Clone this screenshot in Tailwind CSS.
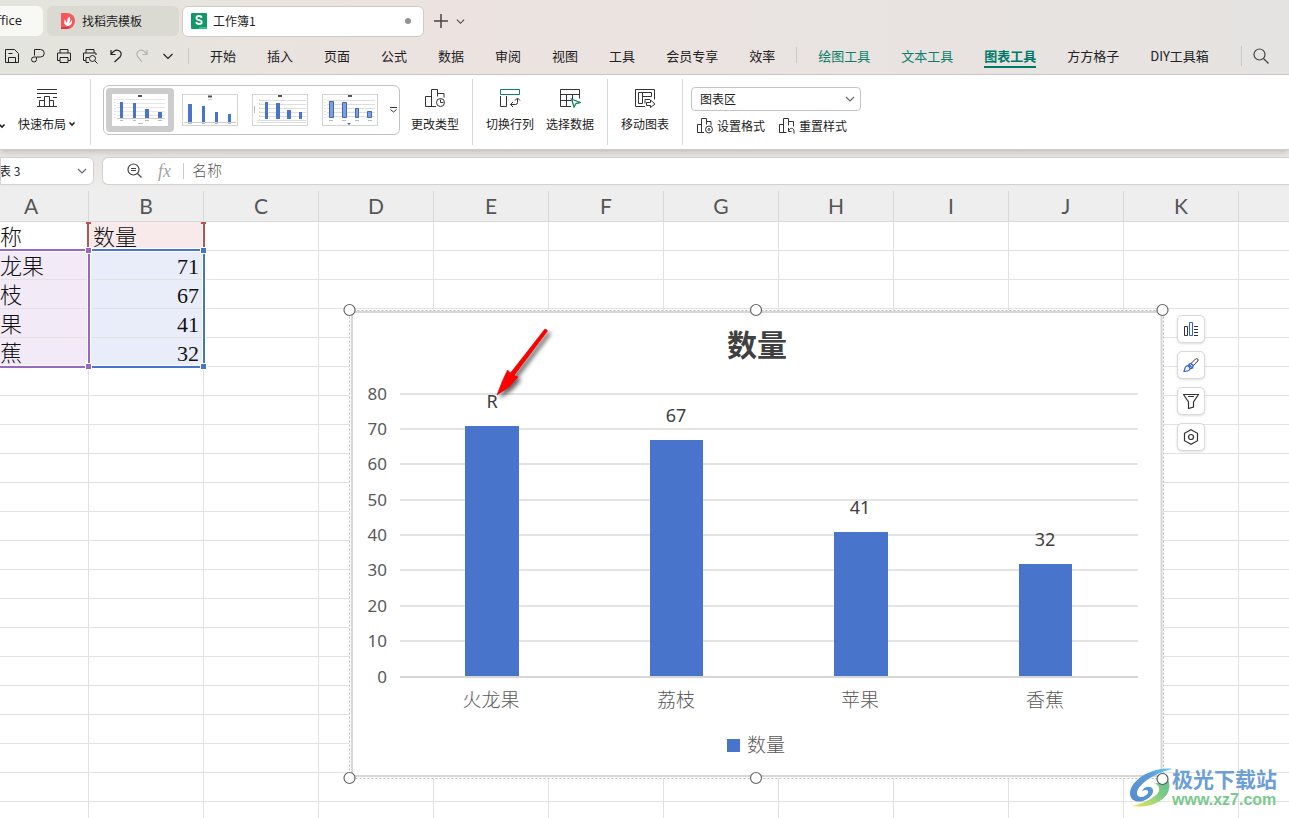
<!DOCTYPE html>
<html lang="zh-CN">
<head>
<meta charset="utf-8">
<title>工作簿1</title>
<script src="https://cdn.jsdelivr.net/npm/@tailwindcss/browser@4"></script>
</head>
<body class="flex h-screen flex-col overflow-hidden bg-white font-['Noto_Sans_CJK_SC',sans-serif] text-xs text-[#222]">

<svg class="hidden">
  <symbol id="chev" viewBox="0 0 10 10"><path d="M1 3l4 4 4-4" fill="none" stroke="currentColor" stroke-width="1.2"/></symbol>
  <symbol id="caret" viewBox="0 0 8 8"><path d="M1.500 2.500L4 5l2.500-2.500" fill="none" stroke="currentColor" stroke-width="1.6"/></symbol>
</svg>

<header class="shrink-0 border-b border-[#c9c5c3] bg-linear-to-r from-[#e3e4dd] via-[#ece3e0] via-35% to-[#e5e3e1]">
  <div class="flex h-[38px] items-center overflow-hidden pt-1">
    <button class="-ml-14 flex h-[30px] w-[99px] shrink-0 items-center justify-end rounded-md bg-[#f8f8f4] pr-[21px] font-['Open_Sans',sans-serif] text-[13px]">WPS Office</button>
    <button class="ml-1 flex h-[30px] w-[132px] shrink-0 items-center gap-[6px] rounded-md bg-[#dadad2] pl-[13px]">
      <svg class="size-4" viewBox="0 0 16 16"><path d="M1 0h6a8 8 0 0 1 0 16H1z" fill="#f4585c"/><path d="M1 14h10a8 8 0 0 1-4 2H1z" fill="#d63a43"/><path d="M8 13C4 12.500 3.500 9 5 6.500L7 10c0-3 .5-5 2.500-6.500C11 6 10 8 9 10.500L12 7c.5 3-1 5.500-4 6z" fill="#fff"/></svg>
      找稻壳模板
    </button>
    <button class="ml-[3px] flex h-[31px] w-[242px] shrink-0 items-center gap-[6px] rounded-md border border-[#cfcac7] bg-white pl-2 pr-3">
      <svg class="size-4" viewBox="0 0 16 16"><rect width="16" height="16" rx="1" fill="#11996b"/><path d="M8 14h8v1a1 1 0 0 1-1 1H8z" fill="#3bbd85"/><path d="M10.800 4.800C10.300 3.400 9.300 3 8 3 6.500 3 5.400 3.700 5.400 5c0 2.800 5.400 1.300 5.400 4 0 1.300-1.200 2-2.700 2-1.500 0-2.600-.6-3-2" fill="none" stroke="#fff" stroke-width="1.800"/></svg>
      <span>工作簿1</span><span class="ml-auto size-[6px] rounded-full bg-[#929292]"></span>
    </button>
    <button class="ml-[10px]" aria-label="新建"><svg class="size-[14px]" viewBox="0 0 14 14"><path d="M7 0v14M0 7h14" stroke="#444" stroke-width="1.500"/></svg></button>
    <button class="ml-2" aria-label="更多标签"><svg class="size-[9px] text-[#444]"><use href="#chev"/></svg></button>
  </div>
  <div class="flex h-9 items-center overflow-hidden pb-px text-[13px] text-[#222]">
    <div class="flex shrink-0 items-center gap-[10px] pl-1 [&_svg]:block [&_svg]:size-4 [&_svg]:fill-none [&_svg]:stroke-current">
      <button aria-label="保存"><svg viewBox="0 0 16 16"><path d="M1.500 1.500h9l4 4v9h-13zM4.500 14.500v-5h7v5M4.500 5.500h4"/></svg></button>
      <button aria-label="输出"><svg viewBox="0 0 16 16"><path d="M4.500 7.500V1.500h6a3.500 3.500 0 0 1 0 7.500H6.500v2.500a2.500 2.500 0 1 1-2.500-2.500h2"/></svg></button>
      <button aria-label="打印"><svg viewBox="0 0 16 16"><path d="M4 5V1.500h8V5M4 12.500H1.500V5h13v7.500H12M4 9.500h8v5H4z"/></svg></button>
      <button aria-label="打印预览"><svg viewBox="0 0 16 16"><path d="M4 5V1.500h8V5M4 12.500H1.500V5h12.500v2M4 14.500V9.500h3M4 14.500h3"/><circle cx="10.500" cy="10.500" r="3"/><path d="M12.700 12.700l2.800 2.800"/></svg></button>
      <button aria-label="撤销"><svg viewBox="0 0 16 16"><path d="M3 2v4.500h4.500M3 6.500C5 3.500 8 1.500 10.500 2.500c3 1.200 3.500 4.300 1.500 6.500L6.500 14" stroke-width="1.200"/></svg></button>
      <button aria-label="恢复" class="text-[#b4b1ae]"><svg viewBox="0 0 16 16"><path d="M13 2v4.500H8.500M13 6.500C11 3.500 8 1.500 5.500 2.500c-3 1.200-3.500 4.300-1.500 6.500l4 5" stroke-width="1.200"/></svg></button>
      <button aria-label="更多"><svg viewBox="0 0 16 16"><path d="M3.500 6l4.500 4.500L12.500 6" stroke-width="1.200"/></svg></button>
    </div>
    <span class="ml-3 h-4 w-px shrink-0 bg-[#cbc8c4]"></span>
    <nav class="ml-[21px] flex shrink-0 items-center gap-[31px] whitespace-nowrap [&_a]:border-y-2 [&_a]:border-transparent">
      <a href="#">开始</a><a href="#">插入</a><a href="#">页面</a><a href="#">公式</a><a href="#">数据</a><a href="#">审阅</a><a href="#">视图</a><a href="#">工具</a><a href="#">会员专享</a><a href="#">效率</a>
      <span class="-mx-[10px] h-4 w-px bg-[#cbc8c4]"></span>
      <a href="#" class="text-[#0b7f6c]">绘图工具</a><a href="#" class="text-[#0b7f6c]">文本工具</a><a href="#" class="font-bold text-[#00796b] shadow-[0_2px_0_#00796b]">图表工具</a><a href="#">方方格子</a><a href="#">DIY工具箱</a>
    </nav>
    <span class="ml-8 h-5 w-px shrink-0 bg-[#cbc8c4]"></span>
    <button class="ml-[10px] shrink-0" aria-label="搜索"><svg class="size-[18px]" viewBox="0 0 18 18" fill="none" stroke="#444" stroke-width="1.200"><circle cx="7.500" cy="7.500" r="5.500"/><path d="M11.500 11.500l5 5"/></svg></button>
  </div>
</header>

<section class="relative z-10 flex h-[75px] shrink-0 items-center overflow-hidden border-b border-[#cfcbc9] bg-white shadow-md">
  <svg class="mt-7 -ml-[2px] size-[8px] shrink-0"><use href="#caret"/></svg>
  <button class="ml-3 flex shrink-0 flex-col items-start gap-2 pb-1">
    <svg class="ml-[18px] h-5 w-[22px]" viewBox="0 0 22 20" fill="none" stroke="#333"><path d="M1 1.500h20M1 5.500h20M1 9.500h4M17 9.500h4M1 18.500h20M3.500 18.500v-6h5M8.500 18.500v-10h5v10M13.500 12.500h4v6"/></svg>
    <span class="flex items-center gap-[2px]">快速布局<svg class="size-2"><use href="#caret"/></svg></span>
  </button>
  <span class="ml-[14px] h-[66px] w-px shrink-0 bg-[#d6d6d6]"></span>
  <div class="mb-1 ml-3 flex h-[50px] w-[297px] shrink-0 items-center rounded-md border border-[#c2c2c2] pl-[2px]">
    <button aria-label="样式 1" class="flex h-11 w-[68px] items-center justify-center rounded-[4px] bg-[#cccccc]"><svg class="h-8 w-14" viewBox="0 0 56 32"><rect width="56" height="32" fill="#fff"/><path d="M5 5.500h48M5 9.500h48M5 13.500h48M5 17.500h48M5 21.500h48" stroke="#e6e6e6"/><path d="M5 24.500h48" stroke="#ccc"/><path d="M3 5v20" stroke="#c9bce8" stroke-dasharray="1 2"/><path d="M26 2h4" stroke="#555" stroke-width="2"/><path d="M8 8h3v16H8zM21 9h3v15h-3zM33 15h4v9h-4zM46 18h4v6h-4z" fill="#4874cb"/><path d="M8 26.500h3M21 26.500h3M33 26.500h4M46 26.500h4M26 29.500h5" stroke="#bbb"/></svg></button>
    <button aria-label="样式 2" class="ml-2 shrink-0"><svg class="h-8 w-14" viewBox="0 0 56 32"><rect x=".5" y=".5" width="55" height="31" fill="#fff" stroke="#d4d4d4"/><path d="M2 28.500h52" stroke="#ccc"/><path d="M26 2.500h4" stroke="#555" stroke-width="2"/><path d="M26 5.500h4" stroke="#bcd"/><path d="M6 10h4v18H6zM20 12h3v16h-3zM33 18h3v10h-3zM46 20h3v8h-3z" fill="#4874cb"/><path d="M6 29.500h4M20 29.500h3M33 29.500h3M46 29.500h3" stroke="#bbb"/></svg></button>
    <button aria-label="样式 3" class="ml-[14px] shrink-0"><svg class="h-8 w-14" viewBox="0 0 56 32"><rect x=".5" y=".5" width="55" height="31" fill="#fff" stroke="#d4d4d4"/><path d="M8 6.500h46M8 10.500h46M8 14.500h46M8 18.500h46M8 22.500h46M5 26.500h49M5 28.500h49" stroke="#ddd"/><path d="M7.500 5v21" stroke="#e5d3a6" stroke-dasharray="2 2"/><path d="M2.500 12v7" stroke="#bbb"/><path d="M26 2h4" stroke="#555" stroke-width="2"/><path d="M13 8h3v17h-3zM24 9h4v16h-4zM35 16h4v9h-4zM47 18h3v7h-3z" fill="#4874cb"/></svg></button>
    <button aria-label="样式 4" class="ml-[14px] shrink-0"><svg class="h-8 w-14" viewBox="0 0 56 32"><rect x=".5" y=".5" width="55" height="31" fill="#fff" stroke="#d4d4d4"/><path d="M5 6.500h48M5 10.500h48M5 14.500h48M5 18.500h48M5 22.500h48" stroke="#ddd"/><path d="M3 5v20" stroke="#c9bce8" stroke-dasharray="1 2"/><path d="M26 2h4" stroke="#555" stroke-width="2"/><g fill="#7b9fe2" stroke="#3f68bd"><path d="M7.500 7.500h4v16h-4zM20.500 8.500h4v15h-4zM33.500 14.500h3v9h-3zM45.500 17.500h4v6h-4z"/></g><path d="M25 29h4l-2 2z" fill="#3f68bd"/><path d="M7 26.500h4M20 26.500h4M33 26.500h4M46 26.500h4" stroke="#bbb"/></svg></button>
    <button aria-label="更多样式" class="ml-3 shrink-0"><svg class="h-[6px] w-[7px]" viewBox="0 0 7 6"><path d="M0 .5h7M.5 2.500L3.500 5l3-2.500" fill="none" stroke="#333"/></svg></button>
  </div>
  <div class="ml-[11px] flex shrink-0 items-center">
    <button class="flex flex-col items-center gap-2 pb-1"><svg class="h-5 w-[22px]" viewBox="0 0 22 20" fill="none" stroke="#333"><path d="M12 18.500H1.500v-10h6M7.500 18.500v-17h6v7M14 5.500h6v4"/><circle cx="16.500" cy="14.500" r="4"/><path d="M16.500 11.500v3h3"/></svg>更改类型</button>
    <span class="mx-[13px] h-[66px] w-px bg-[#d6d6d6]"></span>
    <button class="flex flex-col items-center gap-2 pb-1"><svg class="h-5 w-[22px]" viewBox="0 0 22 20" fill="none" stroke="#333"><path d="M1.500 1.500h19v5h-19z" stroke="#11845b"/><path d="M1.500 8v10.500h6V8M11.500 16.500h5q2 0 2-2v-4M14 14l-2.500 2.500L14 19M16 12.500l2.500-2.500 2.500 2.500"/></svg>切换行列</button>
    <button class="ml-3 flex flex-col items-center gap-2 pb-1"><svg class="h-5 w-[22px]" viewBox="0 0 22 20" fill="none" stroke="#333"><path d="M12 18.500H1.500v-17h19v9M1.500 6.500h19M1.500 12.500h11M7.500 6.500v12M13.500 6.500v5"/><path d="M12.500 11l8.500 3.500-4 1-2 3.500z" fill="#fff" stroke="#11845b" stroke-width="1.300"/></svg>选择数据</button>
    <span class="mx-[13px] h-[66px] w-px bg-[#d6d6d6]"></span>
    <button class="flex flex-col items-center gap-2 pb-1"><svg class="h-5 w-[22px]" viewBox="0 0 22 20" fill="none" stroke="#333"><path d="M11 18.500H1.500v-17h19v10M8.500 4.500h9v4h-9zM4.500 4.500h4v11h-4zM11 15.500v-4h5M12.500 14.500h4V12l4.500 4-4.500 3.500v-2h-4z"/></svg>移动图表</button>
    <span class="mr-2 ml-[13px] h-[66px] w-px bg-[#d6d6d6]"></span>
    <div class="flex flex-col gap-[7px] pb-1">
      <label class="relative block w-[170px]"><select aria-label="图表元素" class="block h-6 w-full appearance-none rounded-[4px] border border-[#c4c4c4] bg-white pl-2 leading-5"><option>图表区</option></select><svg class="pointer-events-none absolute top-[7px] right-[6px] size-[10px] text-[#666]"><use href="#chev"/></svg></label>
      <div class="flex gap-[14px] pl-[6px]">
        <button class="flex items-center gap-1"><svg class="size-4" viewBox="0 0 16 16" fill="none" stroke="#333"><path d="M7 14.500H.5v-8h4M4.500 14.500V.5h5v6M10 3.500h4v4"/><circle cx="12" cy="11.500" r="3.500"/><circle cx="12" cy="11.500" r="1"/></svg>设置格式</button>
        <button class="flex items-center gap-1"><svg class="size-4" viewBox="0 0 16 16" fill="none" stroke="#333"><path d="M7.500 14.500H.5v-8h4M4.500 14.500V.5h5v7M10 3.500h4.500v5M9.500 10v3.500h3M9.500 13c1-3.500 5.500-3.500 5.500 0v2.500"/></svg>重置样式</button>
      </div>
    </div>
  </div>
</section>

<section class="flex h-[41px] shrink-0 items-center gap-2 bg-linear-to-b from-[#e7e3e0] to-[#eeeeee]">
  <label class="relative block h-7 w-[94px] shrink-0 overflow-hidden rounded-r-md border border-[#d3d0cd] bg-white"><select aria-label="名称框" class="-ml-[14px] block h-full w-[106px] appearance-none"><option>图表 3</option></select><svg class="pointer-events-none absolute top-2 right-[6px] size-[10px] text-[#666]"><use href="#chev"/></svg></label>
  <div class="flex h-7 min-w-0 flex-1 items-center rounded-l-md border border-r-0 border-[#d3d0cd] bg-white pl-6">
    <button aria-label="缩小"><svg class="block size-[15px]" viewBox="0 0 15 15" fill="none" stroke="#444" stroke-width="1.200"><circle cx="6.500" cy="6.500" r="5.500"/><path d="M10.500 10.500l4 4M4 5.500h5M4 7.500h5"/></svg></button>
    <button class="ml-4 font-['Liberation_Serif',serif] text-[18px] leading-5 text-[#a3a3a3] italic">fx</button>
    <span class="ml-3 h-4 w-px bg-[#ccc]"></span>
    <input aria-label="编辑栏" value="名称" class="ml-2 h-full min-w-0 flex-1 pb-[3px] text-[15px] font-light text-[#555] outline-none">
  </div>
</section>

<main class="relative min-h-0 flex-1 overflow-hidden">
  <table class="-ml-[26px] w-[1380px] table-fixed border-separate border-spacing-0 font-['Liberation_Serif','Noto_Sans_CJK_SC',serif] text-[22px] leading-[24px] text-[#111] [&_td]:h-[29px] [&_td]:border-r [&_td]:border-b [&_td]:border-[#e2e2e2] [&_td]:px-1 [&_td]:pt-1 [&_td]:pb-0 [&_td]:font-light [&_th]:h-[31px] [&_th]:border-r [&_th]:border-b [&_th]:border-[#d8d8d8] [&_th]:bg-[#eeeeee] [&_th]:p-0 [&_th]:font-['Lato',sans-serif] [&_th]:text-[21px] [&_th]:font-normal [&_th]:text-[#555]">
    <thead><tr><th>A</th><th>B</th><th>C</th><th>D</th><th>E</th><th>F</th><th>G</th><th>H</th><th>I</th><th>J</th><th>K</th><th></th></tr></thead>
    <tbody id="rows">
      <tr><td>名称</td><td class="bg-[#f8eaea]">数量</td></tr>
      <tr><td class="bg-[#f2ebf7]">火龙果</td><td class="bg-[#e8edf9] text-right">71</td></tr>
      <tr><td class="bg-[#f2ebf7]">荔枝</td><td class="bg-[#e8edf9] text-right">67</td></tr>
      <tr><td class="bg-[#f2ebf7]">苹果</td><td class="bg-[#e8edf9] text-right">41</td></tr>
      <tr><td class="bg-[#f2ebf7]">香蕉</td><td class="bg-[#e8edf9] text-right">32</td></tr>
    </tbody>
  </table>

  <!-- data range markers -->
  <svg class="pointer-events-none absolute top-[29px] left-0 h-[152px] w-[210px]" viewBox="0 220 210 152">
    <path d="M0 250H88M89 250V367M0 367H88M90 250H204M204 250V367H90M88 222V248M204 222V248" fill="none" stroke="#fff" stroke-width="4"/>
    <path d="M88 223v25M86 223h5M204 223v25M201 223h5" stroke="#c0504d" stroke-width="2"/>
    <path d="M91 250H204V367H91" fill="none" stroke="#4874cb" stroke-width="2"/>
    <path d="M0 250H89V367H0" fill="none" stroke="#9668c0" stroke-width="2"/>
    <g stroke="#fff"><path d="M85.500 247.500h6v6h-6zM85.500 363.500h6v6h-6z" fill="#9668c0"/><path d="M200.500 247.500h6v6h-6zM200.500 363.500h6v6h-6z" fill="#4874cb"/></g>
  </svg>

  <!-- chart object -->
  <svg class="absolute top-[109px] left-[340px] h-[487px] w-[832px] font-['Noto_Sans','Noto_Sans_CJK_SC',sans-serif]" viewBox="340 300 832 487" role="img" aria-label="数量 柱形图">
    <defs><filter id="sh" x="-30%" y="-30%" width="180%" height="180%"><feDropShadow dx="3" dy="3" stdDeviation="2" flood-color="#000" flood-opacity=".6"/></filter></defs>
    <rect x="349" y="310" width="814" height="468" fill="#fff"/>
    <rect x="349.500" y="310.500" width="814" height="468" fill="none" stroke="#bdbdbd" stroke-dasharray="2 2"/>
    <rect x="352" y="312" width="809.500" height="464" fill="none" stroke="#d6d6d6" stroke-width="2"/>
    <path d="M400 394h738M400 429h738M400 464h738M400 500h738M400 535h738M400 570h738M400 606h738M400 641h738" stroke="#e3e3e3" stroke-width="2"/>
    <path d="M400 677h738" stroke="#d6d6d6" stroke-width="2"/>
    <path d="M465 426h54v250h-54zM650 440h53v236h-53zM834 532h54v144h-54zM1019 564h53v112h-53zM727 739h13v13h-13z" fill="#4874cb"/>
    <g class="text-[17px]" fill="#595959" text-anchor="end"><text x="387" y="400">80</text><text x="387" y="435">70</text><text x="387" y="470">60</text><text x="387" y="506">50</text><text x="387" y="541">40</text><text x="387" y="576">30</text><text x="387" y="612">20</text><text x="387" y="647">10</text><text x="387" y="683">0</text></g>
    <g class="text-[18px]" fill="#404040" text-anchor="middle"><text x="492" y="408">R</text><text x="676" y="422">67</text><text x="860" y="514">41</text><text x="1045" y="546">32</text></g>
    <g class="text-[19px] font-light" fill="#595959" text-anchor="middle"><text x="491" y="707">火龙果</text><text x="676" y="707">荔枝</text><text x="860" y="707">苹果</text><text x="1045" y="707">香蕉</text><text x="766" y="752">数量</text></g>
    <text class="text-[30px] font-bold" x="757" y="356" fill="#404040" text-anchor="middle">数量</text>
    <path d="M544.500 329.500q2-1 3 1.500L514 375.500l4 1.500L509 387 497 395 502 382 507.500 370l3 3z" fill="#f00" stroke="#d00000" stroke-width=".6" filter="url(#sh)"/>
    <g fill="#fff" stroke="#666" stroke-width="1.200"><circle cx="349.500" cy="310" r="5.500"/><circle cx="756" cy="310" r="5.500"/><circle cx="1162.500" cy="310" r="5.500"/><circle cx="349.500" cy="778" r="5.500"/><circle cx="756" cy="778" r="5.500"/></g>
  </svg>

  <div class="absolute top-[124px] left-[1177px] flex flex-col gap-2 [&_button]:flex [&_button]:size-7 [&_button]:items-center [&_button]:justify-center [&_button]:rounded-[5px] [&_button]:border [&_button]:border-[#d9d9d9] [&_button]:bg-white [&_button]:shadow [&_svg]:size-4 [&_svg]:fill-none [&_svg]:stroke-[#333]">
    <button aria-label="图表元素"><svg viewBox="0 0 16 16"><path d="M1.500 5.500h3v9h-3zM11 5.500h4M11 8.500h4M11 11.500h4M11 14.500h4"/><path d="M6.500 1.500h3v13h-3z" stroke="#2f5fd8"/></svg></button>
    <button aria-label="图表样式"><svg viewBox="0 0 16 16"><path d="M8 6.500L12.500 2c1.500-1.200 3.500.5 2.300 2L10.200 8.700z"/><path d="M6 7.500L8 6.500l2.200 2.200L9.500 11M.5 14.500c1.300-.5.800-2.500 2-4.500 2-2.500 5.500 0 4 2.800-1 1.700-3.500 1.700-6 1.700zM5 9l1-1.500 3.500 3.500-2.500 1" stroke="#2f5fd8" stroke-width="1.200"/></svg></button>
    <button aria-label="图表筛选器"><svg viewBox="0 0 16 16"><path d="M.5 1.500h15L10.500 9v5l-5 1.500V9zM5 3.500h6" stroke-width="1.200"/></svg></button>
    <button aria-label="设置图表区域格式"><svg viewBox="0 0 16 16"><path d="M8 .7l6.500 3.600v7.400L8 15.300 1.500 11.700V4.300z" stroke-width="1.200"/><circle cx="8" cy="8" r="2.500" stroke-width="1.200"/></svg></button>
  </div>

  <!-- site mark -->
  <a href="#" class="absolute top-[574px] left-[1128px] flex items-center gap-[2px] whitespace-nowrap">
    <svg class="h-[42px] w-[42px] overflow-visible" viewBox="0 0 42 42">
      <defs><linearGradient id="b1" x1="0" y1="1" x2="1" y2="0"><stop stop-color="#568dcc"/><stop offset=".6" stop-color="#5c9ad8"/><stop offset="1" stop-color="#5fd0f5"/></linearGradient><linearGradient id="g1" x1="0" y1="1" x2="1" y2="0"><stop stop-color="#e9e95c"/><stop offset=".6" stop-color="#7ecb86"/><stop offset="1" stop-color="#5cc394"/></linearGradient></defs>
      <path d="M45 3C26 0 3 13 2 27c0 7 6 10 13 8 6-2 11-7 10-11-1-5-9-4-11 1 4-2 7-1 6 2-2 4-10 6-11 1C8 20 25 7 45 3z" fill="url(#b1)"/>
      <path d="M26 17c6 2 7 8 2 12-7 6-16 9-24 11 19 3 35-6 37-17 1-5 0-8-2-10-3 3-8 5-13 4z" fill="url(#g1)"/>
      <circle cx="34.500" cy="13" r="5.500" fill="#fff" stroke="#555" stroke-width="1.200"/>
    </svg>
    <span class="flex flex-col"><span class="text-[21px] leading-[26px] font-bold text-[#6c9fd5]">极光下载站</span><span class="font-['Liberation_Sans',sans-serif] text-[16px] leading-[18px] font-bold text-[#79c98c]">www.xz7.com</span></span>
  </a>
</main>

<script>
  // pad the sheet: twelve columns in every row, plus the empty rows below the data
  const body = document.getElementById('rows');
  while (body.rows.length < 21) body.insertRow();
  for (const row of body.rows) while (row.cells.length < 12) row.insertCell();
</script>
</body>
</html>
